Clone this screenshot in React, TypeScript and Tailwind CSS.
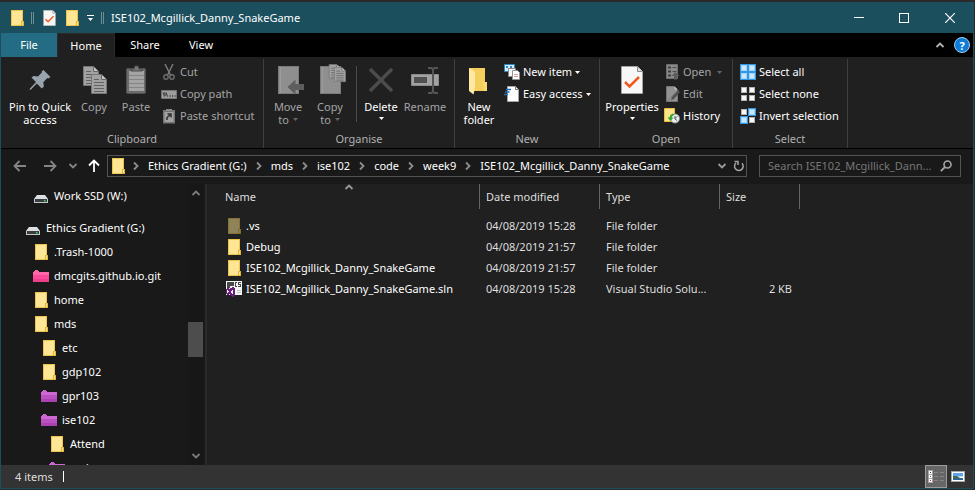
import type { ReactNode } from "react";

type IconProps = { className?: string };

function FolderIcon({ className = "" }: IconProps) {
  return (
    <svg viewBox="0 0 16 16" className={`h-4 w-4 shrink-0 ${className}`} shapeRendering="crispEdges" aria-hidden="true">
      <path d="M2 0h12v11h1v5H2z" fill="#ecc54a" />
      <path d="M3 1h10v14H3z" fill="#ffe694" />
      <path d="M12 11h3v5h-3z" fill="#e0b53a" />
      <path d="M13 12h1v3h-1z" fill="#ffe694" />
    </svg>
  );
}

function ColorFolderIcon({ color }: { color: "pink" | "purple" }) {
  const tones = color === "pink" ? ["#ff67a9", "#fb4a9a", "#ee3f8d"] : ["#cb68d2", "#bb50c2", "#a843b0"];
  return (
    <svg viewBox="0 0 16 16" className="h-4 w-4 shrink-0" shapeRendering="crispEdges" aria-hidden="true">
      <path d="M0 4h1V3h1V2h3v1h1v1h10v3H0z" fill={tones[0]} />
      <path d="M0 7h16v4H0z" fill={tones[1]} />
      <path d="M0 11h16v3H0z" fill={tones[2]} />
    </svg>
  );
}

function DriveIcon() {
  return (
    <svg viewBox="0 0 16 16" className="h-4 w-4 shrink-0" aria-hidden="true">
      <path d="M4 7h8l3 4H1z" fill="#dde0e2" />
      <path d="M1 11h14v4H1z" fill="#c3c6c9" />
      <path d="M2 11h12v3H2z" fill="#3b3e40" />
      <path d="M11 12h1.500v1.500H11z" fill="#2fe04a" />
    </svg>
  );
}

function SolutionIcon() {
  return (
    <svg viewBox="0 0 16 16" className="h-4 w-4 shrink-0" shapeRendering="crispEdges" aria-hidden="true">
      <path d="M0 0h16v14H0z" fill="#f6f6f6" />
      <path d="M1 1h7v4H4v2H1z" fill="#474747" />
      <path d="M9 1h2v1h-1v3h1v1H9zM12 1h3v1h-2v1h2v3h-3V5h2V4h-2z" fill="#444" />
      <path d="M11 9h4v1h-4zM11 11h4v1h-4z" fill="#c4c4c4" />
      <path d="M6 6h2v1h1v8H8v1H6v-1H5v-1H4v-1H3v1H1v-1H0V8h1V7h2v1h1V7h2z" fill="#68217a" />
      <path d="M1 9h1v1h1v1H2v1H1zM7 9v4H6v-1H5v-2h1V9z" fill="#f6f6f6" />
    </svg>
  );
}

function CheckPageIcon({ className }: IconProps) {
  return (
    <svg viewBox="0 0 22 28" className={className} aria-hidden="true">
      <path d="M.5.5h16l5 5v22H.5z" fill="#f7f7f7" stroke="#a5a5a5" />
      <path d="M16.500.5v5h5" fill="#dcdcdc" stroke="#8a8a8a" />
      <path d="m4 16 4.500 4.500L18 11" fill="none" stroke="#f1581d" strokeWidth="2.500" />
    </svg>
  );
}

function PinIcon() {
  return (
    <svg viewBox="0 0 32 32" className="h-8 w-8" aria-hidden="true">
      <path d="m19.500 6 7 7-2.200 1.600-1-.6-4 4.200.6 4.300-2.200 2-4.900-4.900L7 25.500l-1.500.5.500-1.500L12 18 7.500 13.500 9.500 12l4.500.5 4-4.300-.3-1z" fill="#98a3ad" />
    </svg>
  );
}

function PageShape({ x, y }: { x: number; y: number }) {
  return (
    <g transform={`translate(${x} ${y})`}>
      <path d="M.5.5h10l5 5v14H.5z" fill="#a2a2a2" stroke="#777" />
      <path d="M10.500.5v5h5" fill="#c4c4c4" stroke="#666" />
      <path d="M3 5.500h5M3 8.500h10M3 11.500h10M3 14.500h10M3 17.500h10" stroke="#626262" />
    </g>
  );
}

function CopyIcon() {
  return (
    <svg viewBox="0 0 32 32" className="h-8 w-8" aria-hidden="true">
      <PageShape x={5} y={2} />
      <PageShape x={13} y={10} />
    </svg>
  );
}

function PasteIcon() {
  return (
    <svg viewBox="0 0 32 32" className="h-8 w-8" aria-hidden="true">
      <rect x="6.500" y="4.500" width="19" height="25" rx="1" fill="#6b6b6b" stroke="#515151" />
      <path d="M9 7h15v20H9z" fill="#a4a4a4" />
      <path d="M9 11.500h15M9 15.500h15M9 19.500h15M9 23.500h15" stroke="#858585" />
      <path d="M11 7V5h3l1-3h3l1 3h3v2z" fill="#777" stroke="#4a4a4a" />
    </svg>
  );
}

function MoveIcon() {
  return (
    <svg viewBox="0 0 32 32" className="h-8 w-8" aria-hidden="true">
      <path d="M6 2h21v28H6z" fill="#8f8f8f" />
      <path d="M6.500 2.500h20v27h-20z" fill="none" stroke="#7a7a7a" />
      <path d="M8.500 3v26" stroke="#9c9c9c" />
      <path d="m15.500 23 8-7.500V20H32v6h-8.500v4.500z" fill="#5e5e5e" />
    </svg>
  );
}

function CopyToIcon() {
  return (
    <svg viewBox="0 0 32 32" className="h-8 w-8" aria-hidden="true">
      <path d="M6 2h21v28H6z" fill="#8f8f8f" />
      <path d="M6.500 2.500h20v27h-20z" fill="none" stroke="#7a7a7a" />
      <path d="M8.500 3v26" stroke="#9c9c9c" />
      <g transform="translate(14 0) scale(.75)">
        <PageShape x={1} y={0} />
        <PageShape x={8} y={4} />
      </g>
    </svg>
  );
}

function DeleteIcon() {
  return (
    <svg viewBox="0 0 32 32" className="h-8 w-8" aria-hidden="true">
      <path d="m5 5 22 22M27 5 5 27" stroke="#4c4c4c" strokeWidth="3.500" />
    </svg>
  );
}

function RenameIcon() {
  return (
    <svg viewBox="0 0 32 32" className="h-8 w-8" aria-hidden="true">
      <path d="M2.500 10.500h27v11h-27z" fill="#a2a2a2" stroke="#8b8b8b" />
      <path d="M5 13h13v6H5z" fill="#505050" />
      <path d="M19 4h3.500L24 5.500 25.500 4H29M24 5.500v22M19 29h3.500l1.500-1.500 1.500 1.500H29" fill="none" stroke="#555" strokeWidth="2" />
    </svg>
  );
}

function NewFolderIcon() {
  return (
    <svg viewBox="0 0 32 32" className="h-8 w-8" aria-hidden="true">
      <path d="M6 4h16v14h2v9H6z" fill="#f4cf5e" />
      <path d="m6 4 6 4v16l-1.500 6.500L6 27z" fill="#ffe9a2" />
      <path d="M20.500 18H24v9h-3.500z" fill="#f9d971" />
    </svg>
  );
}

function SmallSvg({ children }: { children: ReactNode }) {
  return (
    <svg viewBox="0 0 16 16" className="h-4 w-4 shrink-0" aria-hidden="true">
      {children}
    </svg>
  );
}

const cutIcon = (
  <SmallSvg>
    <path d="m4 0 5.500 11M12 0 6.500 11" stroke="#7d7d7d" strokeWidth="1.400" />
    <circle cx="5" cy="13" r="2.200" fill="none" stroke="#6c6c6c" strokeWidth="1.400" />
    <circle cx="11" cy="13" r="2.200" fill="none" stroke="#6c6c6c" strokeWidth="1.400" />
  </SmallSvg>
);
const copyPathIcon = (
  <SmallSvg>
    <path d="M.5 4.500h15v8H.5z" fill="#9c9c9c" stroke="#767676" />
    <path d="m2 6.500 1.500 4M5 6.500l1.500 4M3.500 6.500l1 3" stroke="#333" />
    <path d="M8.500 10h1M11 10h1M13.500 10h1" stroke="#333" strokeWidth="1.500" />
  </SmallSvg>
);
const pasteShortcutIcon = (
  <SmallSvg>
    <path d="M2 2h12v13.500H2z" fill="#757575" />
    <path d="M3.500 4h9v10h-9z" fill="#a3a3a3" />
    <path d="M5 3V1h6v2z" fill="#8a8a8a" />
    <path d="M6 12V9.500L9 7M6.500 6H10v3.500" fill="none" stroke="#303030" strokeWidth="1.500" />
  </SmallSvg>
);
const newItemIcon = (
  <SmallSvg>
    <path d="M.5.5h10v7H.5z" fill="#d7ecfa" stroke="#2c88c4" />
    <path d="M2 3h2M6 3h2" stroke="#2c88c4" strokeWidth="2" />
    <path d="M4.500 4.500h7v8h-7z" fill="#f7f7f7" stroke="#8b8b8b" />
    <path d="M8.500 6.500h5l2 2v7h-7z" fill="#fff" stroke="#929292" />
    <path d="M10 10.500h4M10 12.500h4" stroke="#d99595" />
  </SmallSvg>
);
const easyAccessIcon = (
  <SmallSvg>
    <path d="M3.500.5h8l3 3v12h-11z" fill="#fff" stroke="#a5a5a5" />
    <path d="M11.500.5v3h3" fill="none" stroke="#777" />
    <path d="M2 3.500h5M1 6h4.500M0 8.500h4" stroke="#1d6fb3" strokeWidth="1.300" />
  </SmallSvg>
);
const openIcon = (
  <SmallSvg>
    <path d="M2.500.5h11v14h-11z" fill="#8a8a8a" stroke="#6e6e6e" />
    <path d="M4 2.500h3v2H4zM4 6.500h3v2H4zM4 10.500h3v2H4z" fill="#3f3f3f" />
    <path d="M8.500 3.500h4M8.500 7.500h4" stroke="#4d4d4d" />
    <path d="m11.500 8 4 4h-2.500v3.500h-3V12H7.500z" fill="#5d5d5d" />
  </SmallSvg>
);
const editIcon = (
  <SmallSvg>
    <path d="M2.500.5h8l3 3v12h-11z" fill="#939393" stroke="#757575" />
    <path d="M10.500.5v3h3" fill="#bbb" />
    <path d="M7 14.500 8 11l6-7 2 2-6 7z" fill="#515151" />
    <path d="M3 15.500 11 7" stroke="#777" />
  </SmallSvg>
);
const historyIcon = (
  <SmallSvg>
    <path d="M.5.5h10v13H.5z" fill="#ffe38a" stroke="#e8bd3b" />
    <circle cx="11" cy="10.500" r="4.500" fill="#e9eef0" stroke="#8d9497" />
    <path d="M11 8v3l2 1.500M13 8.500l-2 2" fill="none" stroke="#555" />
    <path d="M9.500 5.500a5 5 0 0 0-4 4H3.500L6.500 13l3-3.500h-2A3.500 3.500 0 0 1 10 7z" fill="#2ea62e" />
  </SmallSvg>
);

function SelectTiles({ on }: { on: boolean[] }) {
  const spots = [
    [0, 0],
    [8, 0],
    [0, 8],
    [8, 8],
  ];
  return (
    <svg viewBox="0 0 16 16" className="h-4 w-4 shrink-0" shapeRendering="crispEdges" aria-hidden="true">
      {spots.map(([x, y], i) => (
        <g key={i} transform={`translate(${x} ${y})`}>
          {on[i] && <path d="M0 0h8v8H0z" fill="#3497e4" />}
          <path d="M1 1h6v6H1z" fill={on[i] ? "#9fd3f8" : "#b4b4b4"} />
          <path d="M2 2h4v4H2z" fill={on[i] ? "#cbe7fb" : "#f8f8f8"} />
        </g>
      ))}
    </svg>
  );
}

function Caret({ className = "" }: IconProps) {
  return (
    <svg viewBox="0 0 5 3" className={`h-[3px] w-[5px] shrink-0 ${className}`} aria-hidden="true">
      <path d="M0 0h5L2.500 3z" fill="currentColor" />
    </svg>
  );
}

function Chevron({ className = "" }: IconProps) {
  return (
    <svg viewBox="0 0 10 10" className={`h-[10px] w-[10px] shrink-0 ${className}`} aria-hidden="true">
      <path d="M1.500 3 5 6.500 8.500 3" fill="none" stroke="currentColor" strokeWidth="1.800" />
    </svg>
  );
}

type BigProps = { icon: ReactNode; lines: string[]; width: string; off?: boolean; caret?: "inline" | "below" };

function BigButton({ icon, lines, width, off, caret }: BigProps) {
  return (
    <button
      className={`flex shrink-0 flex-col items-center whitespace-nowrap leading-[13px] ${width} ${off ? "text-[#a5a5a5]" : "text-white"}`}
    >
      {icon}
      <span className="mt-1">{lines[0]}</span>
      {lines[1] && (
        <span className="flex items-center gap-1">
          {lines[1]}
          {caret === "inline" && <Caret className="text-[#666]" />}
        </span>
      )}
      {caret === "below" && <Caret className="mt-1" />}
    </button>
  );
}

function SmallButton({ icon, label, off, caret }: { icon: ReactNode; label: string; off?: boolean; caret?: boolean }) {
  return (
    <button className={`flex h-[22px] items-center gap-[3px] whitespace-nowrap ${off ? "text-[#a5a5a5]" : "text-white"}`}>
      {icon}
      <span>{label}</span>
      {caret && <Caret className={off ? "ml-[3px] text-[#666]" : ""} />}
    </button>
  );
}

function Group({ title, width, pad, children }: { title: string; width: string; pad: string; children: ReactNode }) {
  return (
    <section className={`flex shrink-0 flex-col border-r border-[#3f3f3f] ${width}`} aria-label={title}>
      <div className={`flex h-[70px] ${pad}`}>{children}</div>
      <div className="pt-[2px] text-center leading-4 text-[#b0b0b0]">{title}</div>
    </section>
  );
}

function Ribbon() {
  return (
    <div className="flex h-[92px] shrink-0 border-b border-black bg-[#202020] pt-[2px]">
      <Group title="Clipboard" width="w-[263px]" pad="pl-[6px]">
        <div className="flex pt-[5px]">
          <BigButton icon={<PinIcon />} lines={["Pin to Quick", "access"]} width="w-[66px]" />
          <BigButton icon={<CopyIcon />} lines={["Copy"]} width="w-[42px]" off />
          <BigButton icon={<PasteIcon />} lines={["Paste"]} width="w-[42px]" off />
        </div>
        <div className="pl-1 pt-[2px]">
          <SmallButton icon={cutIcon} label="Cut" off />
          <SmallButton icon={copyPathIcon} label="Copy path" off />
          <SmallButton icon={pasteShortcutIcon} label="Paste shortcut" off />
        </div>
      </Group>
      <Group title="Organise" width="w-[191px]" pad="pl-[3px] pt-[5px]">
        <BigButton icon={<MoveIcon />} lines={["Move", "to"]} width="w-[42px]" off caret="inline" />
        <BigButton icon={<CopyToIcon />} lines={["Copy", "to"]} width="w-[42px]" off caret="inline" />
        <div className="mx-[5px] mt-[2px] h-14 w-px bg-[#4a4a4a]" />
        <BigButton icon={<DeleteIcon />} lines={["Delete"]} width="w-[38px]" caret="below" />
        <BigButton icon={<RenameIcon />} lines={["Rename"]} width="w-[50px]" off />
      </Group>
      <Group title="New" width="w-[145px]" pad="pl-[2px]">
        <div className="pt-[5px]">
          <BigButton icon={<NewFolderIcon />} lines={["New", "folder"]} width="w-[44px]" />
        </div>
        <div className="pl-[3px] pt-[2px]">
          <SmallButton icon={newItemIcon} label="New item" caret />
          <SmallButton icon={easyAccessIcon} label="Easy access" caret />
        </div>
      </Group>
      <Group title="Open" width="w-[133px]" pad="pl-[1px]">
        <div className="pt-[5px]">
          <BigButton
            icon={<span className="flex h-8 w-8 items-center justify-center"><CheckPageIcon className="h-7 w-[22px]" /></span>}
            lines={["Properties"]}
            width="w-[62px]"
            caret="below"
          />
        </div>
        <div className="pl-[1px] pt-[2px]">
          <SmallButton icon={openIcon} label="Open" off caret />
          <SmallButton icon={editIcon} label="Edit" off />
          <SmallButton icon={historyIcon} label="History" />
        </div>
      </Group>
      <Group title="Select" width="w-[115px]" pad="pl-[7px] pt-[2px]">
        <div>
          <SmallButton icon={<SelectTiles on={[true, true, true, true]} />} label="Select all" />
          <SmallButton icon={<SelectTiles on={[false, false, false, false]} />} label="Select none" />
          <SmallButton icon={<SelectTiles on={[false, true, true, false]} />} label="Invert selection" />
        </div>
      </Group>
    </div>
  );
}

function TitleBar() {
  return (
    <header className="flex h-[31px] shrink-0 items-center bg-[#1c4f5e] pl-2 text-white">
      <FolderIcon />
      <span className="ml-[6px] h-3 w-[3px] border-x border-[#6f8d97]" />
      <button className="ml-[9px]" aria-label="Properties">
        <CheckPageIcon className="h-4 w-[13px]" />
      </button>
      <button className="ml-2" aria-label="New folder">
        <FolderIcon />
      </button>
      <button className="ml-[7px] flex flex-col items-center gap-[2px]" aria-label="Customise Quick Access Toolbar">
        <span className="h-px w-[7px] bg-white" />
        <Caret />
      </button>
      <span className="ml-[7px] h-3 w-[3px] border-x border-[#6f8d97]" />
      <h1 className="ml-[7px]">ISE102_Mcgillick_Danny_SnakeGame</h1>
      <div className="ml-auto flex self-stretch">
        <button className="flex w-[45px] items-center justify-center" aria-label="Minimise">
          <span className="h-px w-[10px] bg-white" />
        </button>
        <button className="flex w-[45px] items-center justify-center" aria-label="Maximise">
          <span className="h-[10px] w-[10px] border border-white" />
        </button>
        <button className="flex w-[47px] items-center justify-center" aria-label="Close">
          <svg viewBox="0 0 10 10" className="h-[10px] w-[10px]">
            <path d="m0 0 10 10M10 0 0 10" stroke="#fff" strokeWidth="1.200" />
          </svg>
        </button>
      </div>
    </header>
  );
}

function TabBar() {
  return (
    <nav className="flex h-6 shrink-0 items-stretch bg-black text-white">
      <button className="w-14 bg-[#246c83]">File</button>
      <button className="w-[58px] border-x border-t border-[#2b2b2b] bg-[#202020]">Home</button>
      <button className="w-[60px]">Share</button>
      <button className="w-[52px]">View</button>
      <div className="ml-auto flex items-center gap-[9px] pr-[3px]">
        <button aria-label="Minimise the Ribbon">
          <Chevron className="rotate-180 text-[#b5b5b5]" />
        </button>
        <button
          className="flex h-4 w-4 items-center justify-center rounded-full border border-[#a9cdea] bg-[#0f7bd8] text-[11px] font-bold leading-none"
          aria-label="Help"
        >
          ?
        </button>
      </div>
    </nav>
  );
}

const crumbs = ["Ethics Gradient (G:)", "mds", "ise102", "code", "week9", "ISE102_Mcgillick_Danny_SnakeGame"];

function ArrowIcon({ className = "" }: IconProps) {
  return (
    <svg viewBox="0 0 14 14" className={`h-[14px] w-[14px] ${className}`} aria-hidden="true">
      <path d="M13 7H2M6.500 2 1.500 7l5 5" fill="none" stroke="currentColor" strokeWidth="1.800" />
    </svg>
  );
}

function AddressBar() {
  return (
    <div className="flex h-[35px] shrink-0 items-center bg-[#191919] pb-[1px] pr-3">
      <div className="flex w-[106px] shrink-0 items-center pl-3 text-[#858585]">
        <button aria-label="Back"><ArrowIcon /></button>
        <button className="ml-4" aria-label="Forward"><ArrowIcon className="rotate-180" /></button>
        <button className="ml-[11px]" aria-label="Recent locations"><Chevron className="h-2 w-2" /></button>
        <button className="ml-[9px] text-white" aria-label="Up"><ArrowIcon className="rotate-90" /></button>
      </div>
      <div className="flex h-[22px] min-w-0 flex-1 items-center border border-[#535353] pl-[2px] text-white">
        <FolderIcon />
        {crumbs.map((c) => (
          <span key={c} className="flex shrink-0 items-center">
            <Chevron className="mx-[5px] -rotate-90 text-[#8c8c8c]" />
            <a href="#" className="mx-[2px]">{c}</a>
          </span>
        ))}
        <button className="ml-auto" aria-label="Previous locations"><Chevron className="text-[#9a9a9a]" /></button>
        <button className="ml-[6px] mr-[1px]" aria-label="Refresh">
          <svg viewBox="0 0 12 12" className="h-3 w-3">
            <path d="M3 3a4.300 4.300 0 1 0 6 .3M1.500 1.500h3.500V5" fill="none" stroke="#a5a5a5" strokeWidth="1.500" />
          </svg>
        </button>
      </div>
      <label className="ml-3 flex h-[22px] w-[202px] items-center border border-[#535353] px-2">
        <input
          type="text"
          aria-label="Search folder"
          placeholder="Search ISE102_Mcgillick_Dann..."
          className="w-full min-w-0 bg-transparent outline-none placeholder:text-[#777]"
        />
        <svg viewBox="0 0 12 12" className="h-3 w-3 shrink-0" aria-hidden="true">
          <circle cx="7.500" cy="4.500" r="3.500" fill="none" stroke="#a5a5a5" strokeWidth="1.600" />
          <path d="M5 7 .8 11.200" stroke="#a5a5a5" strokeWidth="1.800" />
        </svg>
      </label>
    </div>
  );
}

type TreeItem = { name: string; kind: "drive" | "folder" | "pink" | "purple"; indent: string };

const tree: TreeItem[] = [
  { name: "Ethics Gradient (G:)", kind: "drive", indent: "pl-6" },
  { name: ".Trash-1000", kind: "folder", indent: "pl-8" },
  { name: "dmcgits.github.io.git", kind: "pink", indent: "pl-8" },
  { name: "home", kind: "folder", indent: "pl-8" },
  { name: "mds", kind: "folder", indent: "pl-8" },
  { name: "etc", kind: "folder", indent: "pl-10" },
  { name: "gdp102", kind: "folder", indent: "pl-10" },
  { name: "gpr103", kind: "purple", indent: "pl-10" },
  { name: "ise102", kind: "purple", indent: "pl-10" },
  { name: "Attend", kind: "folder", indent: "pl-12" },
  { name: "code", kind: "purple", indent: "pl-12" },
];

function TreeRow({ name, kind, indent }: TreeItem) {
  return (
    <li className={`flex h-6 items-center gap-[5px] ${indent}`}>
      {kind === "drive" && <DriveIcon />}
      {kind === "folder" && <FolderIcon />}
      {(kind === "pink" || kind === "purple") && <ColorFolderIcon color={kind} />}
      <a href="#">{name}</a>
    </li>
  );
}

function Sidebar() {
  return (
    <aside className="flex w-[206px] shrink-0 overflow-hidden border-r-2 border-[#2a2a2a] bg-[#191919] text-white">
      <ul className="min-w-0 flex-1">
        <TreeRow name="Work SSD (W:)" kind="drive" indent="pl-8" />
        <li className="h-2" />
        {tree.map((n) => (
          <TreeRow key={n.name} {...n} />
        ))}
      </ul>
      <div className="mr-[2px] flex w-[15px] flex-col items-center bg-[#171717] text-[#7c7c7c]">
        <Chevron className="mt-1 rotate-180" />
        <div className="mt-[124px] h-[35px] w-full bg-[#4d4d4d]" />
        <Chevron className="mb-1 mt-auto" />
      </div>
    </aside>
  );
}

const files = [
  { name: ".vs", date: "04/08/2019 15:28", type: "File folder", size: "", icon: <FolderIcon className="opacity-50" /> },
  { name: "Debug", date: "04/08/2019 21:57", type: "File folder", size: "", icon: <FolderIcon /> },
  { name: "ISE102_Mcgillick_Danny_SnakeGame", date: "04/08/2019 21:57", type: "File folder", size: "", icon: <FolderIcon /> },
  { name: "ISE102_Mcgillick_Danny_SnakeGame.sln", date: "04/08/2019 15:28", type: "Visual Studio Solu...", size: "2 KB", icon: <SolutionIcon /> },
];

function FileList() {
  return (
    <main className="min-w-0 flex-1 overflow-hidden bg-[#202020]">
      <table className="w-[593px] table-fixed border-separate border-spacing-0 text-left">
        <thead className="text-[#dedede]">
          <tr className="h-[25px]">
            <th className="relative w-[273px] border-r border-[#636363] pl-[18px] font-normal">
              Name
              <Chevron className="absolute -top-[2px] left-[137px] rotate-180 text-[#999]" />
            </th>
            <th className="w-[120px] border-r border-[#636363] pl-[6px] font-normal">Date modified</th>
            <th className="w-[120px] border-r border-[#636363] pl-[6px] font-normal">Type</th>
            <th className="w-[80px] border-r border-[#636363] pl-[6px] font-normal">Size</th>
          </tr>
        </thead>
        <tbody className="text-[#dedede]">
          <tr className="h-[6px]" aria-hidden="true">
            <td colSpan={4} />
          </tr>
          {files.map((f) => (
            <tr key={f.name} className="h-[21px]">
              <td className="pl-[19px]">
                <span className="flex items-center gap-1 text-white">
                  {f.icon}
                  {f.name}
                </span>
              </td>
              <td className="pl-[6px]">{f.date}</td>
              <td className="whitespace-nowrap pl-[6px]">{f.type}</td>
              <td className="pr-2 text-right">{f.size}</td>
            </tr>
          ))}
        </tbody>
      </table>
    </main>
  );
}

function StatusBar() {
  return (
    <footer className="flex h-[23px] shrink-0 items-center bg-[#333] pl-[14px] text-[#dedede]">
      <span>4 items</span>
      <span className="ml-[10px] h-[11px] w-px bg-white" />
      <div className="ml-auto flex items-center self-stretch pr-2">
        <button className="flex h-full w-[22px] items-center justify-center border border-[#9b9b9b] bg-[#666]" aria-label="Details view">
          <svg viewBox="0 0 16 13" className="h-[13px] w-4" shapeRendering="crispEdges">
            <path d="M0 0h5v13H0z" fill="#a5a5a5" />
            <path d="M1 1h3v3H1zM1 5h3v3H1zM1 9h3v3H1z" fill="#fff" />
            <path d="M2 2h1v1H2z" fill="#333" />
            <path d="M2 6h1v1H2z" fill="#2b78c4" />
            <path d="M2 10h1v1H2z" fill="#c22" />
            <path d="M6 2h4v1H6zM12 2h4v1h-4zM6 6h4v1H6zM12 6h4v1h-4zM6 10h4v1H6zM12 10h4v1h-4z" fill="#858585" />
          </svg>
        </button>
        <button className="ml-1" aria-label="Large thumbnails view">
          <svg viewBox="0 0 14 11" className="h-[11px] w-[14px]">
            <path d="M0 0h14v11H0z" fill="#a8a8a8" />
            <path d="M1 1h12v9H1z" fill="#fff" />
            <path d="M2 2h10v3H2z" fill="#5da2ee" />
            <path d="M2 5h10v1H2z" fill="#b9dcf4" />
            <path d="M2 5h4l3 2h3v1H2z" fill="#436b4c" />
            <path d="M2 7.500h10V9H2z" fill="#2f62a8" />
          </svg>
        </button>
      </div>
    </footer>
  );
}

export default function App() {
  return (
    <div className="h-screen bg-[#2a2a2a] pb-px pr-px pt-[2px] font-['Noto_Sans','Open_Sans',sans-serif] text-[11px] leading-4">
      <div className="flex h-full flex-col overflow-hidden border-x border-b border-[#1c4f5e]">
        <TitleBar />
        <TabBar />
        <Ribbon />
        <AddressBar />
        <div className="flex min-h-0 flex-1">
          <Sidebar />
          <FileList />
        </div>
        <StatusBar />
      </div>
    </div>
  );
}
